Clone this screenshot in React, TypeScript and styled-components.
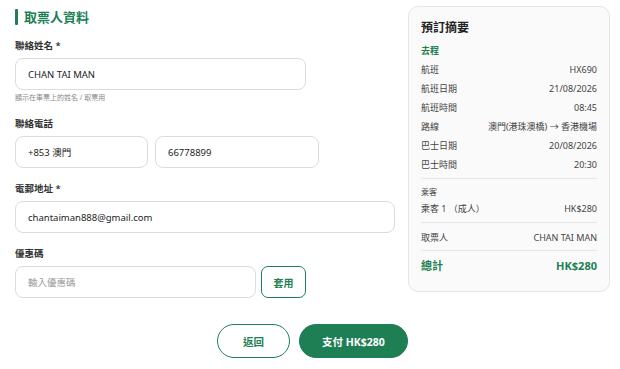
import React from "react";
import styled, { createGlobalStyle } from "styled-components";

const GREEN = "#1e7f55";
const FONT = `"Noto Sans", "Noto Sans CJK TC", sans-serif`;

const Global = createGlobalStyle`
  html, body { margin: 0; padding: 0; background: #fff; }
  body { font-family: ${FONT}; color: #333; }
  * { box-sizing: border-box; }
`;

const Page = styled.div`
  width: 620px;
  height: 369px;
  padding: 6px 10px 0 15px;
  background: #fff;
`;

const Main = styled.div`
  display: grid;
  grid-template-columns: 380px 202px;
  column-gap: 13px;
  align-items: start;
`;

const FormCol = styled.div`
  display: flex;
  flex-direction: column;
  padding-top: 1px;
`;

const Title = styled.h2`
  margin: 0 0 11px;
  height: 20px;
  display: flex;
  align-items: center;
  gap: 6px;
  font-size: 13px;
  line-height: 20px;
  font-weight: 700;
  color: ${GREEN};
  &::before {
    content: "";
    width: 3px;
    height: 16px;
    background: ${GREEN};
    border-radius: 1px;
  }
`;

const Field = styled.div<{ $last?: boolean }>`
  display: flex;
  flex-direction: column;
  margin-bottom: ${(p) => (p.$last ? 0 : 13)}px;
`;

const Label = styled.label`
  font-size: 9.5px;
  line-height: 16px;
  font-weight: 600;
  color: #333;
  margin-bottom: 4px;
`;

const Row = styled.div<{ $gap?: number }>`
  display: flex;
  gap: ${(p) => p.$gap ?? 7}px;
`;

const Input = styled.div<{ $w: number; $placeholder?: boolean }>`
  width: ${(p) => p.$w}px;
  height: 32px;
  border: 1px solid #dcdcdc;
  border-radius: 8px;
  background: #fff;
  padding: 0 12px;
  display: flex;
  align-items: center;
  font-size: 9.5px;
  color: ${(p) => (p.$placeholder ? "#9a9a9a" : "#222")};
`;

const Hint = styled.div`
  margin-top: 2px;
  font-size: 7px;
  line-height: 11px;
  color: #888;
`;

const ApplyBtn = styled.button`
  width: 45px;
  height: 32px;
  border: 1.5px solid ${GREEN};
  border-radius: 7px;
  background: #fff;
  color: ${GREEN};
  font-family: ${FONT};
  font-size: 10px;
  font-weight: 700;
  padding: 0;
`;

const Card = styled.aside`
  background: #fafafa;
  border: 1px solid #e6e6e6;
  border-radius: 10px;
  padding: 11px 12px 15px;
  display: flex;
  flex-direction: column;
`;

const CardTitle = styled.h3`
  margin: 0;
  font-size: 12px;
  line-height: 20px;
  font-weight: 700;
  color: #222;
`;

const Leg = styled.div`
  margin: 6px 0 2px;
  font-size: 9px;
  line-height: 14px;
  font-weight: 700;
  color: ${GREEN};
`;

const SumRow = styled.div`
  display: flex;
  justify-content: space-between;
  align-items: center;
  font-size: 9px;
  line-height: 19px;
  color: #444;
`;

const Section = styled.div<{ $mt: number; $pt: number }>`
  margin-top: ${(p) => p.$mt}px;
  padding-top: ${(p) => p.$pt}px;
  border-top: 1px solid #e6e6e6;
`;

const SubLabel = styled.div`
  font-size: 8px;
  line-height: 14px;
  color: #444;
`;

const Total = styled.div`
  display: flex;
  justify-content: space-between;
  align-items: center;
  font-size: 11px;
  line-height: 20px;
  font-weight: 700;
  color: ${GREEN};
`;

const Footer = styled.div`
  display: flex;
  justify-content: center;
  gap: 9px;
  margin-top: 26px;
`;

const PillBtn = styled.button<{ $primary?: boolean; $w: number }>`
  width: ${(p) => p.$w}px;
  height: 34px;
  border-radius: 17px;
  border: 1.5px solid ${GREEN};
  background: ${(p) => (p.$primary ? GREEN : "#fff")};
  color: ${(p) => (p.$primary ? "#fff" : GREEN)};
  font-family: ${FONT};
  font-size: 10.5px;
  font-weight: 700;
  padding: 0;
`;

const summary: [string, string][] = [
  ["航班", "HX690"],
  ["航班日期", "21/08/2026"],
  ["航班時間", "08:45"],
  ["路線", "澳門(港珠澳橋) → 香港機場"],
  ["巴士日期", "20/08/2026"],
  ["巴士時間", "20:30"],
];

export default function App() {
  return (
    <Page>
      <Global />
      <Main>
        <FormCol>
          <Title>取票人資料</Title>
          <Field>
            <Label>聯絡姓名 *</Label>
            <Input $w={291}>CHAN TAI MAN</Input>
            <Hint>顯示在車票上的姓名 / 取票用</Hint>
          </Field>
          <Field>
            <Label>聯絡電話</Label>
            <Row>
              <Input $w={133}>+853 澳門</Input>
              <Input $w={164}>66778899</Input>
            </Row>
          </Field>
          <Field>
            <Label>電郵地址 *</Label>
            <Input $w={380}>chantaiman888@gmail.com</Input>
          </Field>
          <Field $last>
            <Label>優惠碼</Label>
            <Row $gap={5}>
              <Input $w={241} $placeholder>
                輸入優惠碼
              </Input>
              <ApplyBtn>套用</ApplyBtn>
            </Row>
          </Field>
        </FormCol>
        <Card>
          <CardTitle>預訂摘要</CardTitle>
          <Leg>去程</Leg>
          {summary.map(([k, v]) => (
            <SumRow key={k}>
              <span>{k}</span>
              <span>{v}</span>
            </SumRow>
          ))}
          <Section $mt={4} $pt={6}>
            <SubLabel>乘客</SubLabel>
            <SumRow>
              <span>乘客 1 （成人）</span>
              <span>HK$280</span>
            </SumRow>
          </Section>
          <Section $mt={4} $pt={5}>
            <SumRow>
              <span>取票人</span>
              <span>CHAN TAI MAN</span>
            </SumRow>
          </Section>
          <Section $mt={3} $pt={5}>
            <Total>
              <span>總計</span>
              <span>HK$280</span>
            </Total>
          </Section>
        </Card>
      </Main>
      <Footer>
        <PillBtn $w={73}>返回</PillBtn>
        <PillBtn $w={109} $primary>
          支付 HK$280
        </PillBtn>
      </Footer>
    </Page>
  );
}
